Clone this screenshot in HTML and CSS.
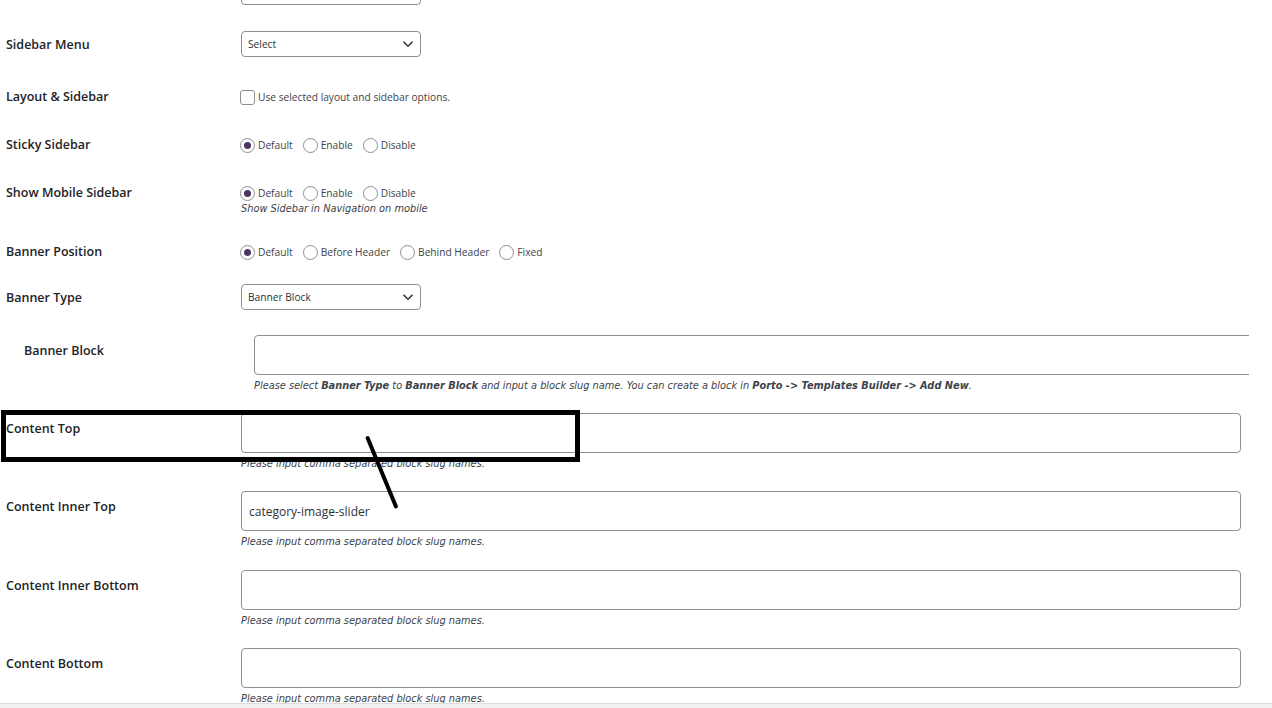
FILE: index.html
```html
<!DOCTYPE html>
<html lang="en">
<head>
    <meta charset="UTF-8">
    <title>Category Options</title>
    <link rel="stylesheet" href="styles.css">
</head>
<body>
    <div class="page">
        <div class="form">
            <div class="row row-cut">
                <div class="label"></div>
                <div class="field">
                    <div class="select"><span></span><svg class="chev" viewBox="0 0 12 8" width="12" height="8"><path d="M1.5 1.8 6 6.2 10.5 1.8" fill="none" stroke="#2c3338" stroke-width="1.6"/></svg></div>
                </div>
            </div>

            <div class="row row-select gap-26">
                <div class="label">Sidebar Menu</div>
                <div class="field">
                    <div class="select"><span>Select</span><svg class="chev" viewBox="0 0 12 8" width="12" height="8"><path d="M1.5 1.8 6 6.2 10.5 1.8" fill="none" stroke="#2c3338" stroke-width="1.6"/></svg></div>
                </div>
            </div>

            <div class="row row-line gap-32">
                <div class="label">Layout &amp; Sidebar</div>
                <div class="field">
                    <label class="opt"><span class="checkbox"></span>Use selected layout and sidebar options.</label>
                </div>
            </div>

            <div class="row row-line gap-32">
                <div class="label">Sticky Sidebar</div>
                <div class="field">
                    <div class="options">
                        <label class="opt"><span class="radio checked"></span>Default</label>
                        <label class="opt"><span class="radio"></span>Enable</label>
                        <label class="opt"><span class="radio"></span>Disable</label>
                    </div>
                </div>
            </div>

            <div class="row row-line gap-32">
                <div class="label">Show Mobile Sidebar</div>
                <div class="field">
                    <div class="options">
                        <label class="opt"><span class="radio checked"></span>Default</label>
                        <label class="opt"><span class="radio"></span>Enable</label>
                        <label class="opt"><span class="radio"></span>Disable</label>
                    </div>
                    <p class="desc">Show Sidebar in Navigation on mobile</p>
                </div>
            </div>

            <div class="row row-line gap-28">
                <div class="label">Banner Position</div>
                <div class="field">
                    <div class="options">
                        <label class="opt"><span class="radio checked"></span>Default</label>
                        <label class="opt"><span class="radio"></span>Before Header</label>
                        <label class="opt"><span class="radio"></span>Behind Header</label>
                        <label class="opt"><span class="radio"></span>Fixed</label>
                    </div>
                </div>
            </div>

            <div class="row row-select gap-24">
                <div class="label">Banner Type</div>
                <div class="field">
                    <div class="select"><span>Banner Block</span><svg class="chev" viewBox="0 0 12 8" width="12" height="8"><path d="M1.5 1.8 6 6.2 10.5 1.8" fill="none" stroke="#2c3338" stroke-width="1.6"/></svg></div>
                </div>
            </div>

            <div class="row row-text row-sub gap-25">
                <div class="label">Banner Block</div>
                <div class="field">
                    <div class="clip"><div class="text-input wide"></div></div>
                    <p class="desc">Please select <b>Banner Type</b> to <b>Banner Block</b> and input a block slug name. You can create a block in <b>Porto -&gt; Templates Builder -&gt; Add New</b>.</p>
                </div>
            </div>

            <div class="row row-text gap-20">
                <div class="label">Content Top</div>
                <div class="field">
                    <div class="text-input"></div>
                    <p class="desc">Please input comma separated block slug names.</p>
                </div>
                <div class="mark-box"></div>
                <div class="mark-line"></div>
            </div>

            <div class="row row-text gap-20">
                <div class="label">Content Inner Top</div>
                <div class="field">
                    <div class="text-input">category-image-slider</div>
                    <p class="desc">Please input comma separated block slug names.</p>
                </div>
            </div>

            <div class="row row-text gap-21">
                <div class="label">Content Inner Bottom</div>
                <div class="field">
                    <div class="text-input"></div>
                    <p class="desc">Please input comma separated block slug names.</p>
                </div>
            </div>

            <div class="row row-text gap-20">
                <div class="label">Content Bottom</div>
                <div class="field">
                    <div class="text-input"></div>
                    <p class="desc">Please input comma separated block slug names.</p>
                </div>
            </div>
        </div>
    </div>
    <div class="footer-bar"></div>
</body>
</html>
```

FILE: styles.css
```css
* {
    margin: 0;
    padding: 0;
    box-sizing: border-box;
}

body {
    background: #fff;
    color: #1d2327;
    font-family: "Open Sans", "Noto Sans", sans-serif;
    height: 708px;
    overflow: hidden;
    display: flex;
    flex-direction: column;
}

.page {
    height: 703px;
    overflow: hidden;
    padding-left: 6px;
}

.form {
    margin-top: -21px;
}

.row {
    display: flex;
    align-items: flex-start;
    position: relative;
}

.gap-20 { margin-top: 20px; }
.gap-21 { margin-top: 21px; }
.gap-24 { margin-top: 24px; }
.gap-25 { margin-top: 25px; }
.gap-26 { margin-top: 26px; }
.gap-28 { margin-top: 28px; }
.gap-32 { margin-top: 32px; }

.label {
    width: 235px;
    flex-shrink: 0;
    font-size: 12.5px;
    font-weight: 600;
    line-height: 18px;
    color: #1d2327;
}

.row-select .label {
    padding-top: 5px;
}

.row-line .label {
    height: 16px;
    line-height: 16px;
}

.row-text .label {
    padding-top: 7px;
}

.row-sub {
    padding-left: 18px;
}

.row-sub .label {
    width: 230px;
}

.field {
    flex: 1;
    min-width: 0;
}

/* selects */
.select {
    width: 180px;
    height: 26px;
    border: 1px solid #8c8f94;
    border-radius: 4px;
    display: flex;
    align-items: center;
    justify-content: space-between;
    padding: 0 6px 0 6px;
    font-size: 10.2px;
    color: #2c3338;
    background: #fff;
}

/* radios / checkbox */
.options {
    display: flex;
    gap: 11px;
}

.opt {
    display: flex;
    align-items: center;
    height: 16px;
    font-size: 10.2px;
    color: #3c434a;
    white-space: nowrap;
}

.radio,
.checkbox {
    width: 15px;
    height: 15px;
    border: 1px solid #8c8f94;
    background: #fff;
    margin: 0 3px 0 -1px;
    position: relative;
    flex-shrink: 0;
}

.radio {
    border-radius: 50%;
}

.checkbox {
    border-radius: 3px;
}

.radio.checked::after {
    content: "";
    position: absolute;
    left: 3px;
    top: 3px;
    width: 7px;
    height: 7px;
    border-radius: 50%;
    background: #4b3766;
}

/* text inputs */
.text-input {
    width: 1000px;
    height: 40px;
    border: 1px solid #8c8f94;
    border-radius: 4px;
    background: #fff;
    font-size: 12px;
    color: #2c3338;
    line-height: 40px;
    padding-left: 7px;
}

.clip {
    width: 995px;
    overflow: hidden;
}

.text-input.wide {
    width: 1040px;
}

.desc {
    margin-top: 4px;
    font-family: "DejaVu Sans", Verdana, sans-serif;
    font-style: italic;
    font-size: 9.8px;
    line-height: 14px;
    color: #3c434a;
    white-space: nowrap;
}

.row-line .desc {
    margin-top: 1px;
}

/* annotation */
.mark-box {
    position: absolute;
    z-index: 5;
    left: -5px;
    top: -3px;
    width: 579px;
    height: 52px;
    border: 5px solid #000;
    pointer-events: none;
}

.mark-line {
    position: absolute;
    z-index: 5;
    left: 359px;
    top: 24px;
    width: 4px;
    height: 78px;
    background: #000;
    border-radius: 2px;
    transform: rotate(-22.5deg);
    transform-origin: top left;
}

.footer-bar {
    flex: 1;
    background: #f0f0f1;
    border-top: 1px solid #dcdcde;
}
```
